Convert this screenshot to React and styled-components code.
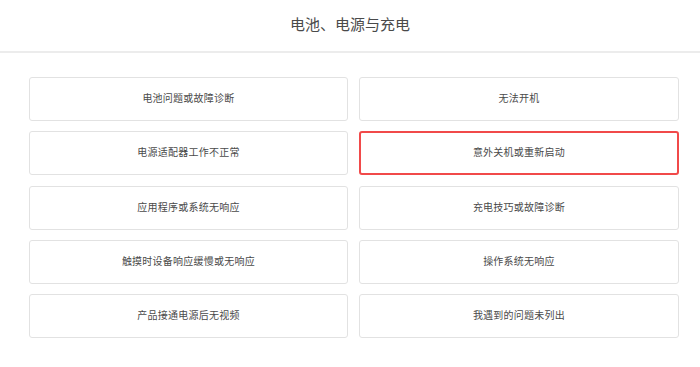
import React from "react";
import styled, { createGlobalStyle } from "styled-components";

const GlobalStyle = createGlobalStyle`
  html, body {
    margin: 0;
    padding: 0;
    background: #fff;
    font-family: "Noto Sans CJK SC", "Noto Sans", sans-serif;
  }
  * {
    box-sizing: border-box;
  }
`;

const Page = styled("div")`
  width: 700px;
  height: 367px;
  background: #fff;
`;

const Header = styled("div")`
  height: 53px;
  padding-bottom: 4px;
  border-bottom: 2px solid #ececec;
  display: flex;
  align-items: center;
  justify-content: center;
  font-size: 15px;
  color: #4a4a4a;
`;

const Grid = styled("div")`
  display: grid;
  grid-template-columns: 319px 320px;
  grid-auto-rows: 44px;
  column-gap: 11px;
  row-gap: 10.25px;
  padding: 24px 0 0 29px;
`;

const Option = styled("div")`
  display: flex;
  align-items: center;
  justify-content: center;
  padding-bottom: 3px;
  border: ${(p) => (p.$active ? "2px solid #f14a4a" : "1px solid #e2e2e2")};
  border-radius: 3px;
  font-size: 10px;
  letter-spacing: 0.25px;
  color: #4a4a4a;
  cursor: pointer;
`;

const options = [
  "电池问题或故障诊断",
  "无法开机",
  "电源适配器工作不正常",
  "意外关机或重新启动",
  "应用程序或系统无响应",
  "充电技巧或故障诊断",
  "触摸时设备响应缓慢或无响应",
  "操作系统无响应",
  "产品接通电源后无视频",
  "我遇到的问题未列出",
];

export default function App() {
  return (
    <Page>
      <GlobalStyle />
      <Header>电池、电源与充电</Header>
      <Grid>
        {options.map((option) => (
          <Option key={option} $active={option === "意外关机或重新启动"}>
            {option}
          </Option>
        ))}
      </Grid>
    </Page>
  );
}
